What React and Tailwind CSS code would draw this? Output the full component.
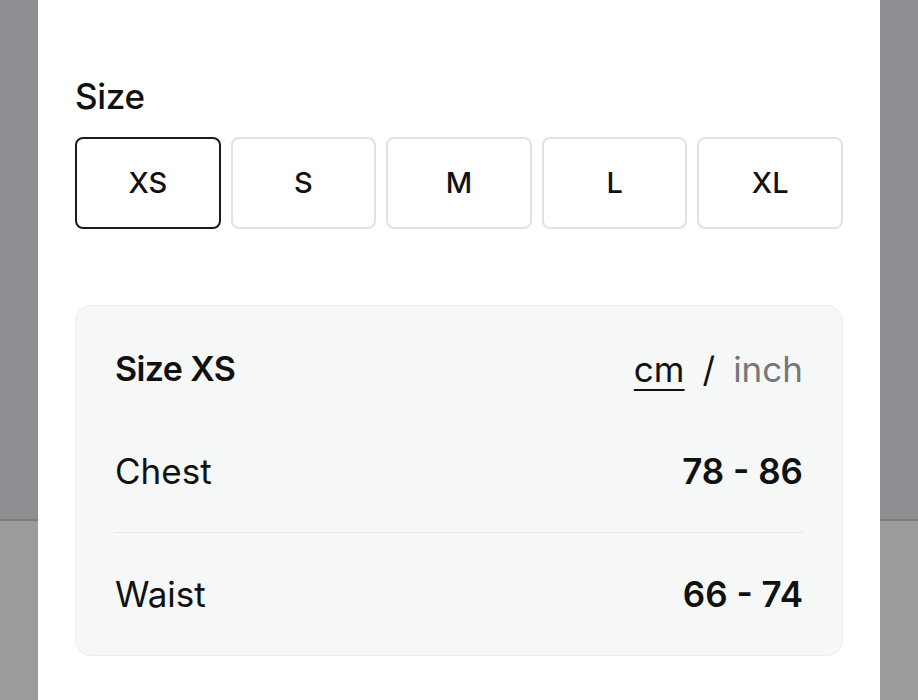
import { useState } from 'react';

const SIZES = ['XS', 'S', 'M', 'L', 'XL'];

const Backdrop = () => (
    <div className="w-[38px] flex flex-col">
        <div className="h-[521px] bg-[#8e8e92] border-b-2 border-[#7b7b7d]" />
        <div className="flex-1 bg-[#9b9b9b]" />
    </div>
);

const MeasureRow = ({ label, value, divider }) => (
    <div className={`flex items-center justify-between py-[41px] ${divider ? 'border-b border-[#e7e9e9]' : ''}`}>
        <span className="text-[35px] leading-[40px] text-[#111]">{label}</span>
        <span className="text-[35px] leading-[40px] font-semibold text-[#111]">{value}</span>
    </div>
);

export default function App() {
    const [size, setSize] = useState('XS');

    return (
        <div className="flex h-[700px] w-[918px] overflow-hidden bg-white" style={{ fontFamily: 'Inter, "Noto Sans", sans-serif' }}>
            <Backdrop />
            <div className="w-[842px] bg-white px-[37px] pt-[76px]">
                {/* Size picker */}
                <h2 className="text-[35px] leading-[40px] font-medium text-[#111] tracking-[-0.3px]">Size</h2>
                <div className="grid grid-cols-5 gap-[10px] mt-[21px]">
                    {SIZES.map(s => (
                        <button
                            key={s}
                            onClick={() => setSize(s)}
                            className={`h-[92px] rounded-[8px] border-2 bg-white text-[29px] font-medium text-[#111] ${s === size ? 'border-[#1c1c1c]' : 'border-[#e2e2e2]'}`}
                        >
                            {s}
                        </button>
                    ))}
                </div>

                {/* Measurements card */}
                <div className="mt-[76px] rounded-[16px] border border-[#eceeee] bg-[#f6f7f7] px-[39px] pt-[43px]">
                    <div className="flex items-center justify-between">
                        <span className="text-[34px] leading-[40px] font-semibold text-[#111] tracking-[-0.6px]">Size {size}</span>
                        <span className="text-[35px] leading-[40px] text-[#111]">
                            <span className="underline decoration-2 underline-offset-[7px]">cm</span>
                            <span className="mx-[18px]">/</span>
                            <span className="text-[#777]">inch</span>
                        </span>
                    </div>
                    <div className="mt-[21px]">
                        <MeasureRow label="Chest" value="78 - 86" divider />
                        <MeasureRow label="Waist" value="66 - 74" />
                    </div>
                </div>
            </div>
            <Backdrop />
        </div>
    );
}
